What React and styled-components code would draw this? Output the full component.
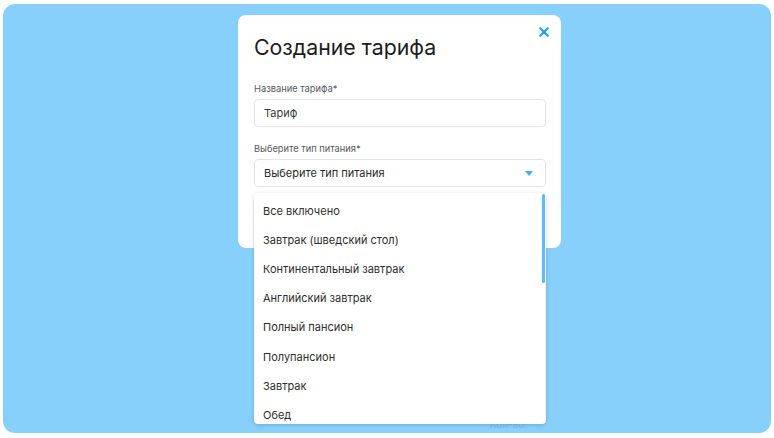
import styled, { createGlobalStyle } from 'styled-components'

const Global = createGlobalStyle`
  html, body { margin: 0; padding: 0; background: #fff; }
  body { font-family: Inter, "Noto Sans", "Liberation Sans", sans-serif; }
`;

const Page = styled.div`
  width: 774px;
  height: 438px;
  padding: 4px 3px 5px 3px;
  box-sizing: border-box;
`;

const Backdrop = styled.div`
  position: relative;
  height: 100%;
  background: #87d0fb;
  border-radius: 12px;
  display: flex;
  align-items: flex-start;
  padding: 11px 0 0 235px;
  box-sizing: border-box;
`;

const Ghost = styled.div`
  position: absolute;
  left: 487px;
  top: 414px;
  font-size: 10px;
  color: #7dbde6;
`;

const Modal = styled.div`
  position: relative;
  z-index: 1;
  width: 323px;
  height: 233px;
  background: #fff;
  border-radius: 8px;
  padding: 17px 15px 0 16px;
  box-sizing: border-box;
  display: flex;
  flex-direction: column;
`;

const Close = styled.button`
  position: absolute;
  top: 11px;
  right: 11px;
  width: 12px;
  height: 12px;
  padding: 0;
  border: 0;
  background: none;
  display: flex;
  align-items: center;
  justify-content: center;
`;

const Title = styled.h1`
  margin: 0;
  font-size: 21.3px;
  line-height: 30px;
  font-weight: 400;
  color: #1c1c1c;
`;

const Field = styled.div`
  position: relative;
  display: flex;
  flex-direction: column;
  gap: 3px;
  margin-top: ${p => p.gap}px;
`;

const Label = styled.div`
  font-size: 9.3px;
  line-height: 14px;
  color: #555a60;
`;

const Box = styled.div`
  height: 28px;
  border: 1px solid #e2e6ea;
  border-radius: 4px;
  box-sizing: border-box;
  display: flex;
  align-items: center;
  justify-content: space-between;
  padding: 0 12px 0 9px;
  font-size: 11px;
  color: ${p => p.muted ? '#2a2a2a' : '#3a3a3a'};
`;

const Arrow = styled.span`
  width: 0;
  height: 0;
  border-left: 4.5px solid transparent;
  border-right: 4.5px solid transparent;
  border-top: 5px solid #41aef2;
`;

const Menu = styled.div`
  position: absolute;
  left: 0;
  right: 0;
  top: calc(100% + 6px);
  height: 231px;
  background: #fff;
  border-radius: 4px;
  box-shadow: 0 1px 4px rgba(0, 0, 0, 0.18);
  overflow: hidden;
  padding-top: 3px;
  box-sizing: border-box;
  display: flex;
  flex-direction: column;
`;

const Thumb = styled.div`
  position: absolute;
  right: 1px;
  top: 1px;
  width: 3px;
  height: 89px;
  background: #5cbcf6;
  border-radius: 2px;
`;

const Item = styled.div`
  flex: 0 0 29.2px;
  display: flex;
  align-items: center;
  padding-left: 9px;
  font-size: 11px;
  color: #2e2e2e;
`;

const options = [
  'Все включено',
  'Завтрак (шведский стол)',
  'Континентальный завтрак',
  'Английский завтрак',
  'Полный пансион',
  'Полупансион',
  'Завтрак',
  'Обед',
];

export default function App() {
  return (
    <Page>
      <Global />
      <Backdrop>
        <Ghost>Кол-во:</Ghost>
        <Modal>
          <Close aria-label="close">
            <svg width="10" height="10" viewBox="0 0 10 10">
              <path d="M1.2 1.2 L8.8 8.8 M8.8 1.2 L1.2 8.8" stroke="#1a9cf0" strokeWidth="2" strokeLinecap="round" />
            </svg>
          </Close>
          <Title>Создание тарифа</Title>
          <Field gap={20}>
            <Label>Название тарифа*</Label>
            <Box>Тариф</Box>
          </Field>
          <Field gap={15}>
            <Label>Выберите тип питания*</Label>
            <Box muted>
              Выберите тип питания
              <Arrow />
            </Box>
            <Menu>
              <Thumb />
              {options.map(o => <Item key={o}>{o}</Item>)}
            </Menu>
          </Field>
        </Modal>
      </Backdrop>
    </Page>
  );
}
